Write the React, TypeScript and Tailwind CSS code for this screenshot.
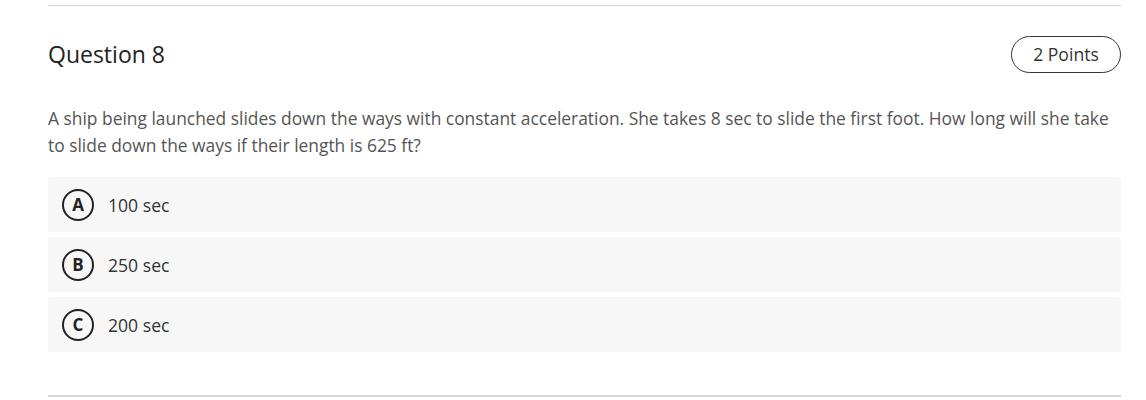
const options = [
  { letter: "A", text: "100 sec" },
  { letter: "B", text: "250 sec" },
  { letter: "C", text: "200 sec" },
];

export default function App() {
  return (
    <div className="h-[400px] bg-white font-['Open_Sans',sans-serif] text-[#333]">
      <div className="ml-12 mr-[25px] pt-[5px]">
        <div className="border-t border-[#d5d5d5]" />
        <div className="flex items-center justify-between pt-[29px]">
          <h2 className="text-[23px] leading-[38px] text-[#222]">Question 8</h2>
          <span className="flex h-[37px] w-[110px] items-center justify-center rounded-full border border-[#333] text-[17.6px] text-[#333]">
            2 Points
          </span>
        </div>
        <p className="mt-[32px] text-[17.4px] leading-[27px] text-[#555]">
          A ship being launched slides down the ways with constant acceleration. She takes 8 sec to slide the first foot. How long will she take to slide down the ways if their length is 625 ft?
        </p>
        <div className="mt-[18px] flex flex-col gap-[5px]">
          {options.map((o) => (
            <div
              key={o.letter}
              className="flex h-[55px] items-center gap-[14px] rounded-[3px] bg-[#f7f7f7] pl-[14px]"
            >
              <span className="flex h-[32px] w-[32px] items-center justify-center rounded-full border-2 border-[#222] text-[17px] font-bold text-[#222]">
                {o.letter}
              </span>
              <span className="pt-[2px] text-[17.6px] text-[#333]">{o.text}</span>
            </div>
          ))}
        </div>
        <div className="mt-[43px] border-t-2 border-[#d5d5d5]" />
      </div>
    </div>
  );
}
